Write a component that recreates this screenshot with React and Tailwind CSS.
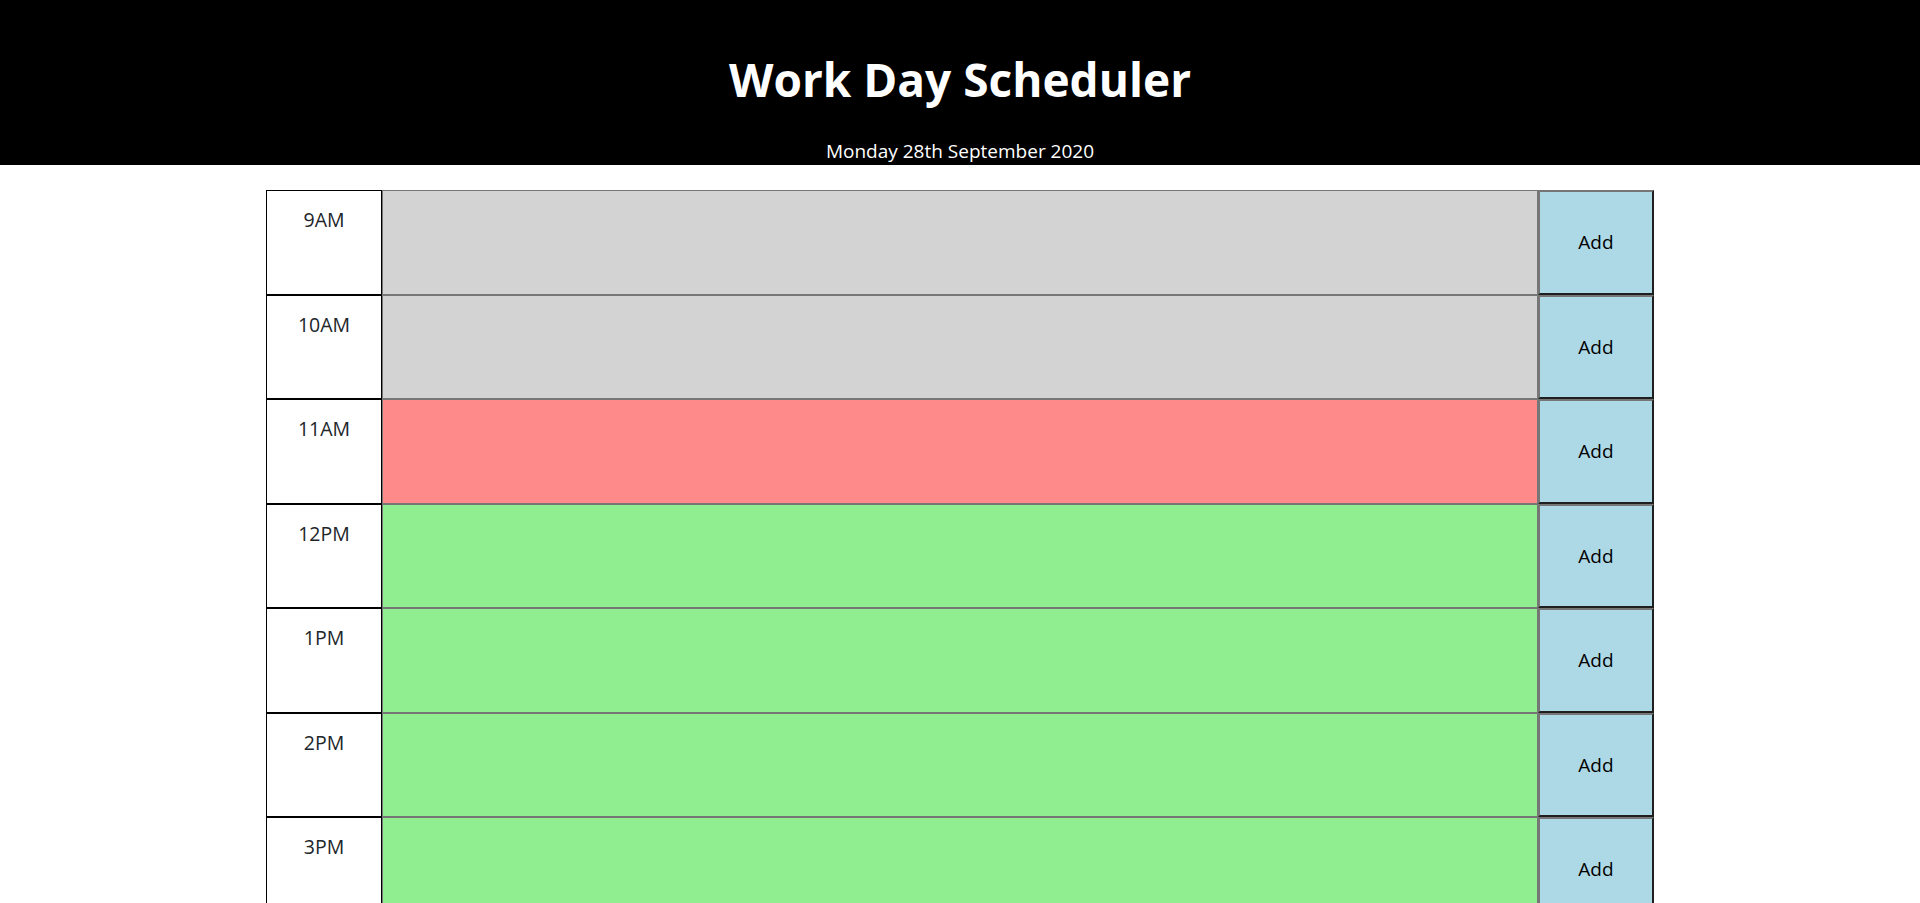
const hours = [
  { label: "9AM", state: "past" },
  { label: "10AM", state: "past" },
  { label: "11AM", state: "present" },
  { label: "12PM", state: "future" },
  { label: "1PM", state: "future" },
  { label: "2PM", state: "future" },
  { label: "3PM", state: "future" },
  { label: "4PM", state: "future" },
  { label: "5PM", state: "future" },
];

const stateClass = {
  past: "bg-[#d3d3d3]",
  present: "bg-[#ff8a8a]",
  future: "bg-[#90ee90]",
};

function TimeBlock({ label, state }) {
  return (
    <div className="grid grid-cols-[116px_1fr_116px] h-[104.5px]">
      <div className="border border-black bg-white text-center text-[19.5px] leading-none pt-[19px] text-[#212529]">
        {label}
      </div>
      <textarea
        className={`border border-[#767676] resize-none outline-none ${stateClass[state]}`}
      ></textarea>
      <button className="bg-[#add8e6] border-2 border-t-[#767676] border-l-[#767676] border-r-[#1f1f1f] border-b-[#1f1f1f] text-[19px] text-black">
        Add
      </button>
    </div>
  );
}

function App() {
  return (
    <div className="min-h-screen bg-white font-['Open_Sans',sans-serif]">
      <header className="h-[165px] bg-black text-white flex flex-col items-center">
        <h1 className="text-[46px] font-bold leading-none mt-[56px]">
          Work Day Scheduler
        </h1>
        <p className="text-[19px] leading-none mt-[40px]">
          Monday 28th September 2020
        </p>
      </header>
      <div className="w-[1388px] mx-auto mt-[25px]">
        {hours.map((h) => (
          <TimeBlock key={h.label} label={h.label} state={h.state} />
        ))}
      </div>
    </div>
  );
}

export default App;
